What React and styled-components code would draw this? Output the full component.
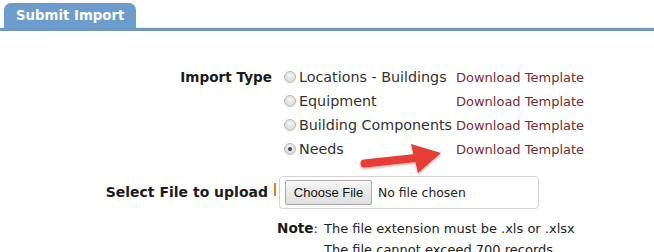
import React from "react";
import styled, { createGlobalStyle } from "styled-components";

const GlobalStyle = createGlobalStyle`
  body {
    margin: 0;
    background: #fff;
    font-family: "DejaVu Sans", Verdana, sans-serif;
    color: #333;
  }
`;

const Page = styled.div`
  position: relative;
  width: 654px;
  height: 252px;
  overflow: hidden;
`;

const TabBar = styled.div`
  display: flex;
  padding-left: 4px;
  padding-top: 3px;
  border-bottom: 3px solid #6f98c1;
  box-shadow: 0 -1px 0 #e6f1f8 inset;
`;

const Tab = styled.div`
  background: #6c9bcd;
  color: #fff;
  font-weight: bold;
  font-size: 13.3px;
  line-height: 25px;
  height: 25px;
  padding: 0 12px 0 12px;
  border-radius: 7px 7px 0 0;
`;

const Form = styled.div`
  padding-top: 34px;
  display: flex;
  flex-direction: column;
`;

const Field = styled.div`
  display: grid;
  grid-template-columns: 272px auto;
  align-items: start;
  margin-top: ${(p) => p.$top || 0}px;
`;

const Label = styled.div`
  font-weight: bold;
  font-size: ${(p) => p.$size || 13.6}px;
  color: #1b1b1b;
  text-align: right;
  line-height: ${(p) => p.$line || 24}px;
  padding-right: ${(p) => p.$pad || 0}px;
  white-space: nowrap;
`;

const Options = styled.div`
  display: grid;
  grid-template-columns: auto auto;
  justify-content: start;
  column-gap: 4px;
  padding-left: 12px;
`;

const Option = styled.label`
  display: flex;
  align-items: center;
  height: 24px;
  font-size: 14.3px;
  color: #333;
  white-space: nowrap;
`;

const Radio = styled.span`
  width: 12px;
  height: 12px;
  box-sizing: border-box;
  border-radius: 50%;
  border: 1px solid #b8b8b8;
  background: radial-gradient(circle at 50% 35%, #f4f4f4, #d2d2d2);
  margin-right: 3px;
  display: flex;
  align-items: center;
  justify-content: center;
  flex-shrink: 0;

  &::after {
    content: "";
    width: 4px;
    height: 4px;
    border-radius: 50%;
    background: ${(p) => (p.$checked ? "#444" : "transparent")};
  }
`;

const TemplateLink = styled.a`
  display: flex;
  align-items: center;
  height: 24px;
  font-size: 13px;
  color: #7b2c2c;
  text-decoration: none;
  white-space: nowrap;
`;

const FileArea = styled.div`
  display: flex;
  align-items: flex-start;
`;

const Marker = styled.span`
  width: 2px;
  height: 13px;
  background: #e8801f;
  margin: 7px 3px 0 2px;
`;

const FileBox = styled.div`
  width: 260px;
  height: 33px;
  box-sizing: border-box;
  border: 1px solid #d3d3d3;
  border-radius: 4px;
  display: flex;
  align-items: center;
  padding-left: 5px;
  gap: 6px;
`;

const ChooseButton = styled.button`
  height: 25px;
  width: 87px;
  font-family: "Liberation Sans", Arial, sans-serif;
  font-size: 13px;
  color: #111;
  border: 1px solid #a9a9a9;
  border-radius: 2px;
  background: linear-gradient(#f6f6f6, #dedede);
  padding: 0;
`;

const FileName = styled.span`
  font-size: 12.4px;
  color: #222;
`;

const NoteRow = styled.div`
  display: flex;
  padding-left: 277px;
  margin-top: 9px;
  font-size: 13px;
  line-height: 21px;
  color: #222;
`;

const NoteLabel = styled.span`
  width: 47px;
  flex-shrink: 0;
  b {
    color: #1b1b1b;
    font-size: 13.6px;
  }
`;

const Arrow = styled.svg`
  position: absolute;
  left: 355px;
  top: 138px;
  overflow: visible;
`;

const options = [
  { name: "Locations - Buildings" },
  { name: "Equipment" },
  { name: "Building Components" },
  { name: "Needs", checked: true },
];

export default function App() {
  return (
    <Page>
      <GlobalStyle />
      <TabBar>
        <Tab>Submit Import</Tab>
      </TabBar>
      <Form>
        <Field>
          <Label>Import Type</Label>
          <Options>
            {options.map((o) => (
              <React.Fragment key={o.name}>
                <Option>
                  <Radio $checked={o.checked} />
                  {o.name}
                </Option>
                <TemplateLink href="#">Download Template</TemplateLink>
              </React.Fragment>
            ))}
          </Options>
        </Field>
        <Field $top={15}>
          <Label $pad={4} $size={14} $line={33}>
            Select File to upload
          </Label>
          <FileArea>
            <Marker />
            <FileBox>
              <ChooseButton>Choose File</ChooseButton>
              <FileName>No file chosen</FileName>
            </FileBox>
          </FileArea>
        </Field>
        <NoteRow>
          <NoteLabel>
            <b>Note</b>:
          </NoteLabel>
          <div>
            <div>The file extension must be .xls or .xlsx</div>
            <div>The file cannot exceed 700 records</div>
          </div>
        </NoteRow>
      </Form>
      <Arrow width="95" height="40" viewBox="0 0 95 40">
        <defs>
          <filter id="sh" x="-20%" y="-20%" width="140%" height="160%">
            <feDropShadow dx="0" dy="1.5" stdDeviation="1.2" floodColor="#000" floodOpacity="0.3" />
          </filter>
        </defs>
        <g filter="url(#sh)" fill="#e63c36">
          <path d="M9 21.5 L60 16 L61 24 L10 29.5 A4 4 0 0 1 9 21.5 Z" />
          <path d="M56 6 L86 15 L63 35 Z" />
        </g>
      </Arrow>
    </Page>
  );
}
